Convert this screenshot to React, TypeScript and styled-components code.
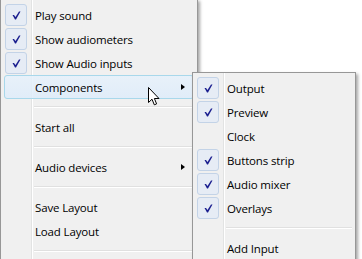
import React from "react";
import styled, { createGlobalStyle } from "styled-components";

const Global = createGlobalStyle`
  html, body { margin: 0; padding: 0; background: #ffffff; }
  body { font-family: "Segoe UI", "Open Sans", "Noto Sans", sans-serif; }
`;

const Stage = styled.div`
  position: relative;
  width: 362px;
  height: 259px;
  overflow: hidden;
  background: #ffffff;
`;

const Menu = styled.div<{ $width: number }>`
  box-sizing: border-box;
  width: ${(p) => p.$width}px;
  padding: 3px 3px 20px 3px;
  border: 1px solid #979797;
  background-color: #f0f0f0;
  background-image: linear-gradient(
    to right,
    transparent 30px,
    #e2e3e3 30px,
    #e2e3e3 31px,
    #ffffff 31px,
    #ffffff 32px,
    transparent 32px
  );
  box-shadow: 2px 2px 3px rgba(0, 0, 0, 0.35);
  display: flex;
  flex-direction: column;
`;

const MainMenu = styled(Menu)`
  margin-top: -1px;
`;

const SubMenu = styled(Menu)`
  position: absolute;
  left: 192px;
  top: 72px;
`;

const Item = styled.div<{ $active?: boolean }>`
  box-sizing: border-box;
  height: 24px;
  display: flex;
  align-items: center;
  border: 1px solid ${(p) => (p.$active ? "#a8d8eb" : "transparent")};
  border-radius: 3px;
  background: ${(p) =>
    p.$active
      ? "linear-gradient(to bottom, rgba(230,241,251,0.85), rgba(222,236,250,0.85))"
      : "transparent"};
  font-size: 11.5px;
  letter-spacing: -0.15px;
  color: #000000;
  white-space: nowrap;
`;

const CheckBox = styled.div<{ $on?: boolean }>`
  box-sizing: border-box;
  width: 22px;
  height: 22px;
  flex: none;
  display: flex;
  align-items: center;
  justify-content: center;
  border-radius: 3px;
  border: 1px solid ${(p) => (p.$on ? "#c3d3e7" : "transparent")};
  background: ${(p) => (p.$on ? "#e6ecf5" : "transparent")};
`;

const Label = styled.span`
  flex: 1;
  padding-left: 8px;
  padding-top: 2px;
  line-height: 20px;
`;

const Arrow = styled.div`
  width: 0;
  height: 0;
  border-top: 3.5px solid transparent;
  border-bottom: 3.5px solid transparent;
  border-left: 4px solid #000;
  margin-right: 8px;
`;

const Separator = styled.div`
  height: 16px;
  display: flex;
  align-items: center;
  padding-left: 30px;
  &::after {
    content: "";
    flex: 1;
    border-top: 1px solid #e0e0e0;
    border-bottom: 1px solid #ffffff;
    height: 0;
  }
`;

const CursorWrap = styled.div`
  position: absolute;
  left: 148px;
  top: 87px;
  width: 13px;
  height: 20px;
`;

const Check = () => (
  <svg width="9" height="9" viewBox="0 0 9 9">
    <polygon
      points="0.5,4 2,4 3.5,6 7,0.5 8.5,0.5 4,8.5 3,8.5"
      fill="#1b1f8f"
    />
  </svg>
);

type Entry =
  | { kind: "item"; label: string; checked?: boolean; active?: boolean; sub?: boolean }
  | { kind: "sep" };

const mainItems: Entry[] = [
  { kind: "item", label: "Play sound", checked: true },
  { kind: "item", label: "Show audiometers", checked: true },
  { kind: "item", label: "Show Audio inputs", checked: true },
  { kind: "item", label: "Components", active: true, sub: true },
  { kind: "sep" },
  { kind: "item", label: "Start all" },
  { kind: "sep" },
  { kind: "item", label: "Audio devices", sub: true },
  { kind: "sep" },
  { kind: "item", label: "Save Layout" },
  { kind: "item", label: "Load Layout" },
  { kind: "sep" },
];

const subItems: Entry[] = [
  { kind: "item", label: "Output", checked: true },
  { kind: "item", label: "Preview", checked: true },
  { kind: "item", label: "Clock" },
  { kind: "item", label: "Buttons strip", checked: true },
  { kind: "item", label: "Audio mixer", checked: true },
  { kind: "item", label: "Overlays", checked: true },
  { kind: "sep" },
  { kind: "item", label: "Add Input" },
];

const renderEntries = (list: Entry[]) =>
  list.map((e, i) =>
    e.kind === "sep" ? (
      <Separator key={i} />
    ) : (
      <Item key={i} $active={e.active}>
        <CheckBox $on={e.checked}>{e.checked && <Check />}</CheckBox>
        <Label>{e.label}</Label>
        {e.sub && <Arrow />}
      </Item>
    )
  );

export default function App() {
  return (
    <Stage>
      <Global />
      <MainMenu $width={198}>{renderEntries(mainItems)}</MainMenu>
      <SubMenu $width={164}>{renderEntries(subItems)}</SubMenu>
      <CursorWrap>
        <svg width="13" height="20" viewBox="0 0 13 20">
          <path
            d="M0.5 0.5 L0.5 15.5 L4 12.2 L6.3 17.8 L8.6 16.9 L6.4 11.5 L11 11.5 Z"
            fill="#ffffff"
            stroke="#000000"
            strokeWidth="1"
            strokeLinejoin="miter"
          />
        </svg>
      </CursorWrap>
    </Stage>
  );
}
